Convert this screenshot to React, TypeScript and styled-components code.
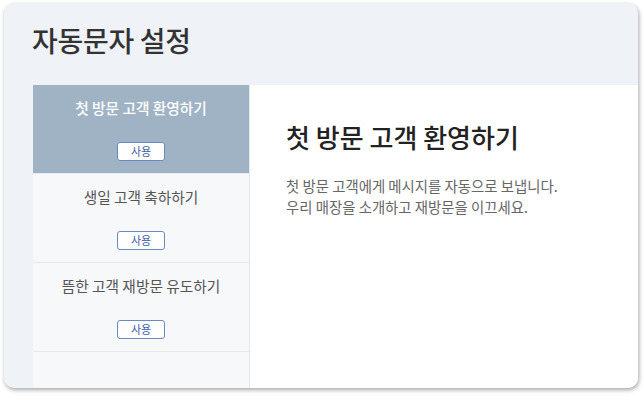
import React from 'react'
import styled, { createGlobalStyle } from 'styled-components';

const GlobalStyle = createGlobalStyle`
    html, body {
        margin: 0;
        padding: 0;
        background: #ffffff;
    }
    body {
        font-family: "Noto Sans CJK KR", "Noto Sans", sans-serif;
        padding: 3px 6px 11px 4px;
    }
`;

const Card = styled.div`
    width: 634px;
    height: 385px;
    border-radius: 10px;
    background-color: #eff3f8;
    box-shadow: 1px 2px 4px rgba(0, 0, 0, 0.35);
    overflow: hidden;
    display: flex;
    flex-direction: column;
`;

const Header = styled.div`
    height: 82px;
    padding-left: 28px;
    display: flex;
    align-items: center;
    box-sizing: border-box;
    padding-bottom: 9px;
`;

const Title = styled.h1`
    margin: 0;
    font-size: 28px;
    font-weight: 500;
    line-height: 36px;
    color: #333;
    letter-spacing: -0.3px;
`;

const Body = styled.div`
    flex: 1;
    display: flex;
    padding-left: 29px;
`;

const Sidebar = styled.div`
    width: 216px;
    background-color: #f7f8fa;
    border-right: 1px solid #e3e7ec;
    display: flex;
    flex-direction: column;
`;

const Item = styled.div<{ $active?: boolean }>`
    height: 89px;
    box-sizing: border-box;
    border-bottom: 1px solid #e6e9ed;
    background-color: ${p => p.$active ? '#9fb3c5' : 'transparent'};
    display: flex;
    flex-direction: column;
    align-items: center;
    padding-top: 13px;
`;

const ItemTitle = styled.div<{ $active?: boolean }>`
    font-size: 14.7px;
    line-height: 20px;
    color: ${p => p.$active ? '#ffffff' : '#555'};
    font-weight: ${p => p.$active ? 500 : 400};
`;

const UseButton = styled.button`
    margin-top: 24px;
    width: 48px;
    height: 19px;
    padding: 0;
    border: 1px solid #6a89c4;
    border-radius: 3px;
    background: #ffffff;
    color: #3f5fa8;
    font-family: inherit;
    font-size: 11px;
    line-height: 17px;
`;

const Content = styled.div`
    flex: 1;
    background: #ffffff;
    padding: 34px 0 0 36px;
`;

const ContentTitle = styled.h2`
    margin: 0;
    font-size: 26px;
    font-weight: 500;
    line-height: 36px;
    color: #222;
`;

const Desc = styled.p`
    margin: 20px 0 0;
    font-size: 14.4px;
    line-height: 21px;
    color: #666;
`;

const items = [
    { title: '첫 방문 고객 환영하기', active: true },
    { title: '생일 고객 축하하기' },
    { title: '뜸한 고객 재방문 유도하기' },
];

export default function App() {
    return (
        <>
            <GlobalStyle />
            <Card>
                <Header>
                    <Title>자동문자 설정</Title>
                </Header>
                <Body>
                    <Sidebar>
                        {items.map(it => (
                            <Item key={it.title} $active={it.active}>
                                <ItemTitle $active={it.active}>{it.title}</ItemTitle>
                                <UseButton>사용</UseButton>
                            </Item>
                        ))}
                    </Sidebar>
                    <Content>
                        <ContentTitle>첫 방문 고객 환영하기</ContentTitle>
                        <Desc>
                            첫 방문 고객에게 메시지를 자동으로 보냅니다.<br />
                            우리 매장을 소개하고 재방문을 이끄세요.
                        </Desc>
                    </Content>
                </Body>
            </Card>
        </>
    )
}
